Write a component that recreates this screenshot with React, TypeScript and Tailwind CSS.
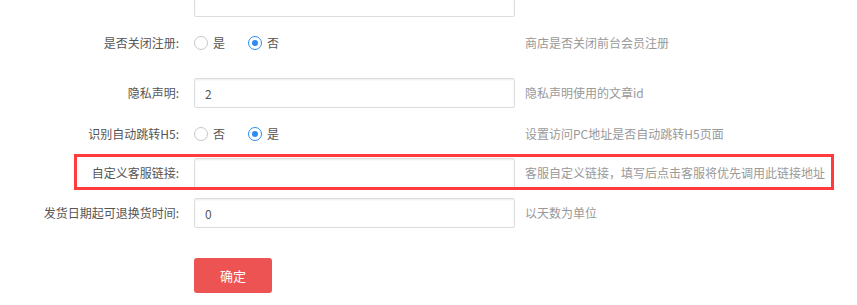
import React from 'react';

const font = { fontFamily: '"Noto Sans CJK SC", "Noto Sans", sans-serif' };

const Label: React.FC<{ text: string }> = ({ text }) => (
    <div className="w-[180px] shrink-0 pr-[1px] text-right text-[12px] text-[#555]">{text}:</div>
);

const Hint: React.FC<{ text: string }> = ({ text }) => (
    <div className="ml-[10px] text-[12px] text-[#999] whitespace-nowrap">{text}</div>
);

const TextInput: React.FC<{ value?: string }> = ({ value = '' }) => (
    <input
        readOnly
        value={value}
        className="ml-[14px] h-[30px] w-[321px] shrink-0 rounded-[2px] border border-[#ddd] bg-white px-[10px] text-[12px] text-[#555] shadow-[inset_0_1px_2px_rgba(0,0,0,0.08)] outline-none"
    />
);

const Radio: React.FC<{ label: string; checked?: boolean }> = ({ label, checked }) => (
    <label className="flex w-[54px] items-center gap-[5px] text-[12px] text-[#555]">
        {checked ? (
            <span className="flex h-[14px] w-[14px] items-center justify-center rounded-full border border-[#2d8cf0] bg-white">
                <span className="h-[6px] w-[6px] rounded-full bg-[#2d8cf0]" />
            </span>
        ) : (
            <span className="h-[14px] w-[14px] rounded-full border border-[#c8c8c8] bg-white" />
        )}
        {label}
    </label>
);

const RadioGroup: React.FC<{ options: [string, string]; selected: number }> = ({ options, selected }) => (
    <div className="ml-[14px] flex w-[321px] shrink-0 items-center">
        <Radio label={options[0]} checked={selected === 0} />
        <Radio label={options[1]} checked={selected === 1} />
    </div>
);

const App: React.FC = () => {
    return (
        <div className="h-[305px] w-[857px] overflow-hidden bg-white" style={font}>
            {/* field cut off at the top */}
            <div className="mt-[-13px] mb-[11px] flex h-[30px] items-center">
                <div className="w-[180px] shrink-0" />
                <TextInput />
            </div>

            <div className="mb-[20px] flex h-[30px] items-center">
                <Label text="是否关闭注册" />
                <RadioGroup options={['是', '否']} selected={1} />
                <Hint text="商店是否关闭前台会员注册" />
            </div>

            <div className="mb-[11px] flex h-[30px] items-center">
                <Label text="隐私声明" />
                <TextInput value="2" />
                <Hint text="隐私声明使用的文章id" />
            </div>

            <div className="mb-[9px] flex h-[30px] items-center">
                <Label text="识别自动跳转H5" />
                <RadioGroup options={['否', '是']} selected={1} />
                <Hint text="设置访问PC地址是否自动跳转H5页面" />
            </div>

            <div className="relative mb-[10px] flex h-[30px] items-center">
                <Label text="自定义客服链接" />
                <TextInput />
                <Hint text="客服自定义链接，填写后点击客服将优先调用此链接地址" />
                {/* highlight annotation */}
                <div className="pointer-events-none absolute left-[74px] top-[-4px] h-[36px] w-[760px] border-[3px] border-[#ff3b3b]" />
            </div>

            <div className="flex h-[30px] items-center">
                <Label text="发货日期起可退换货时间" />
                <TextInput value="0" />
                <Hint text="以天数为单位" />
            </div>

            <div className="mt-[30px] flex">
                <div className="w-[194px] shrink-0" />
                <button className="h-[35px] w-[78px] rounded-[3px] bg-[#ee5353] text-[13px] text-white">确定</button>
            </div>
        </div>
    );
};

export default App;
